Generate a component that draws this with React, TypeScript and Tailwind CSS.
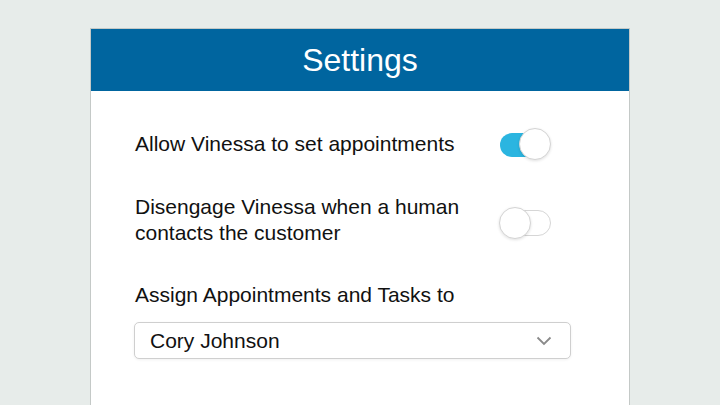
function Toggle({ on }: { on: boolean }) {
  return (
    <div className="relative h-[32px] w-[52px] shrink-0">
      <div
        className={
          on
            ? "absolute left-[1px] top-[5px] h-[24px] w-[48px] rounded-full bg-[#2bb5e0]"
            : "absolute left-[4px] top-[3px] h-[26px] w-[48px] rounded-full border border-[#d6d6d6] bg-white"
        }
      />
      <div
        className={
          "absolute top-0 h-[32px] w-[32px] rounded-full border border-[#d4d4d4] bg-white shadow-[0_1px_3px_rgba(0,0,0,0.12)] " +
          (on ? "left-[20px]" : "left-0")
        }
      />
    </div>
  );
}

export default function App() {
  return (
    <div
      className="h-[405px] w-[720px] overflow-hidden bg-[#e7ecea] pt-[28px] pl-[90px]"
      style={{ fontFamily: '"Liberation Sans", Arial, sans-serif' }}
    >
      <div className="h-[400px] w-[540px] border border-[#c4c9c7] bg-white">
        <div className="flex h-[62px] items-center justify-center bg-[#00659f] text-[32px] text-white">
          Settings
        </div>
        <div className="pl-[43px] pt-[37px] text-[21px] leading-[26px] text-[#111]">
          <div className="flex w-[437px] items-center justify-between pr-[20px]">
            <div className="pl-[1px]">Allow Vinessa to set appointments</div>
            <Toggle on />
          </div>
          <div className="mt-[34px] flex w-[437px] items-center justify-between pr-[20px]">
            <div className="w-[340px] pl-[1px]">Disengage Vinessa when a human contacts the customer</div>
            <div className="mt-[6px]">
              <Toggle on={false} />
            </div>
          </div>
          <div className="mt-[36px] pl-[1px]">Assign Appointments and Tasks to</div>
          <div className="mt-[14px] flex h-[37px] w-[437px] items-center justify-between rounded-[5px] border border-[#cfcfcf] bg-white pl-[15px] pr-[18px] shadow-[0_1px_3px_rgba(0,0,0,0.06)]">
            <span>Cory Johnson</span>
            <svg width="16" height="10" viewBox="0 0 16 10" fill="none">
              <path d="M1.5 1.5L8 8L14.5 1.5" stroke="#8a8a8a" strokeWidth="1.8" />
            </svg>
          </div>
        </div>
      </div>
    </div>
  );
}
